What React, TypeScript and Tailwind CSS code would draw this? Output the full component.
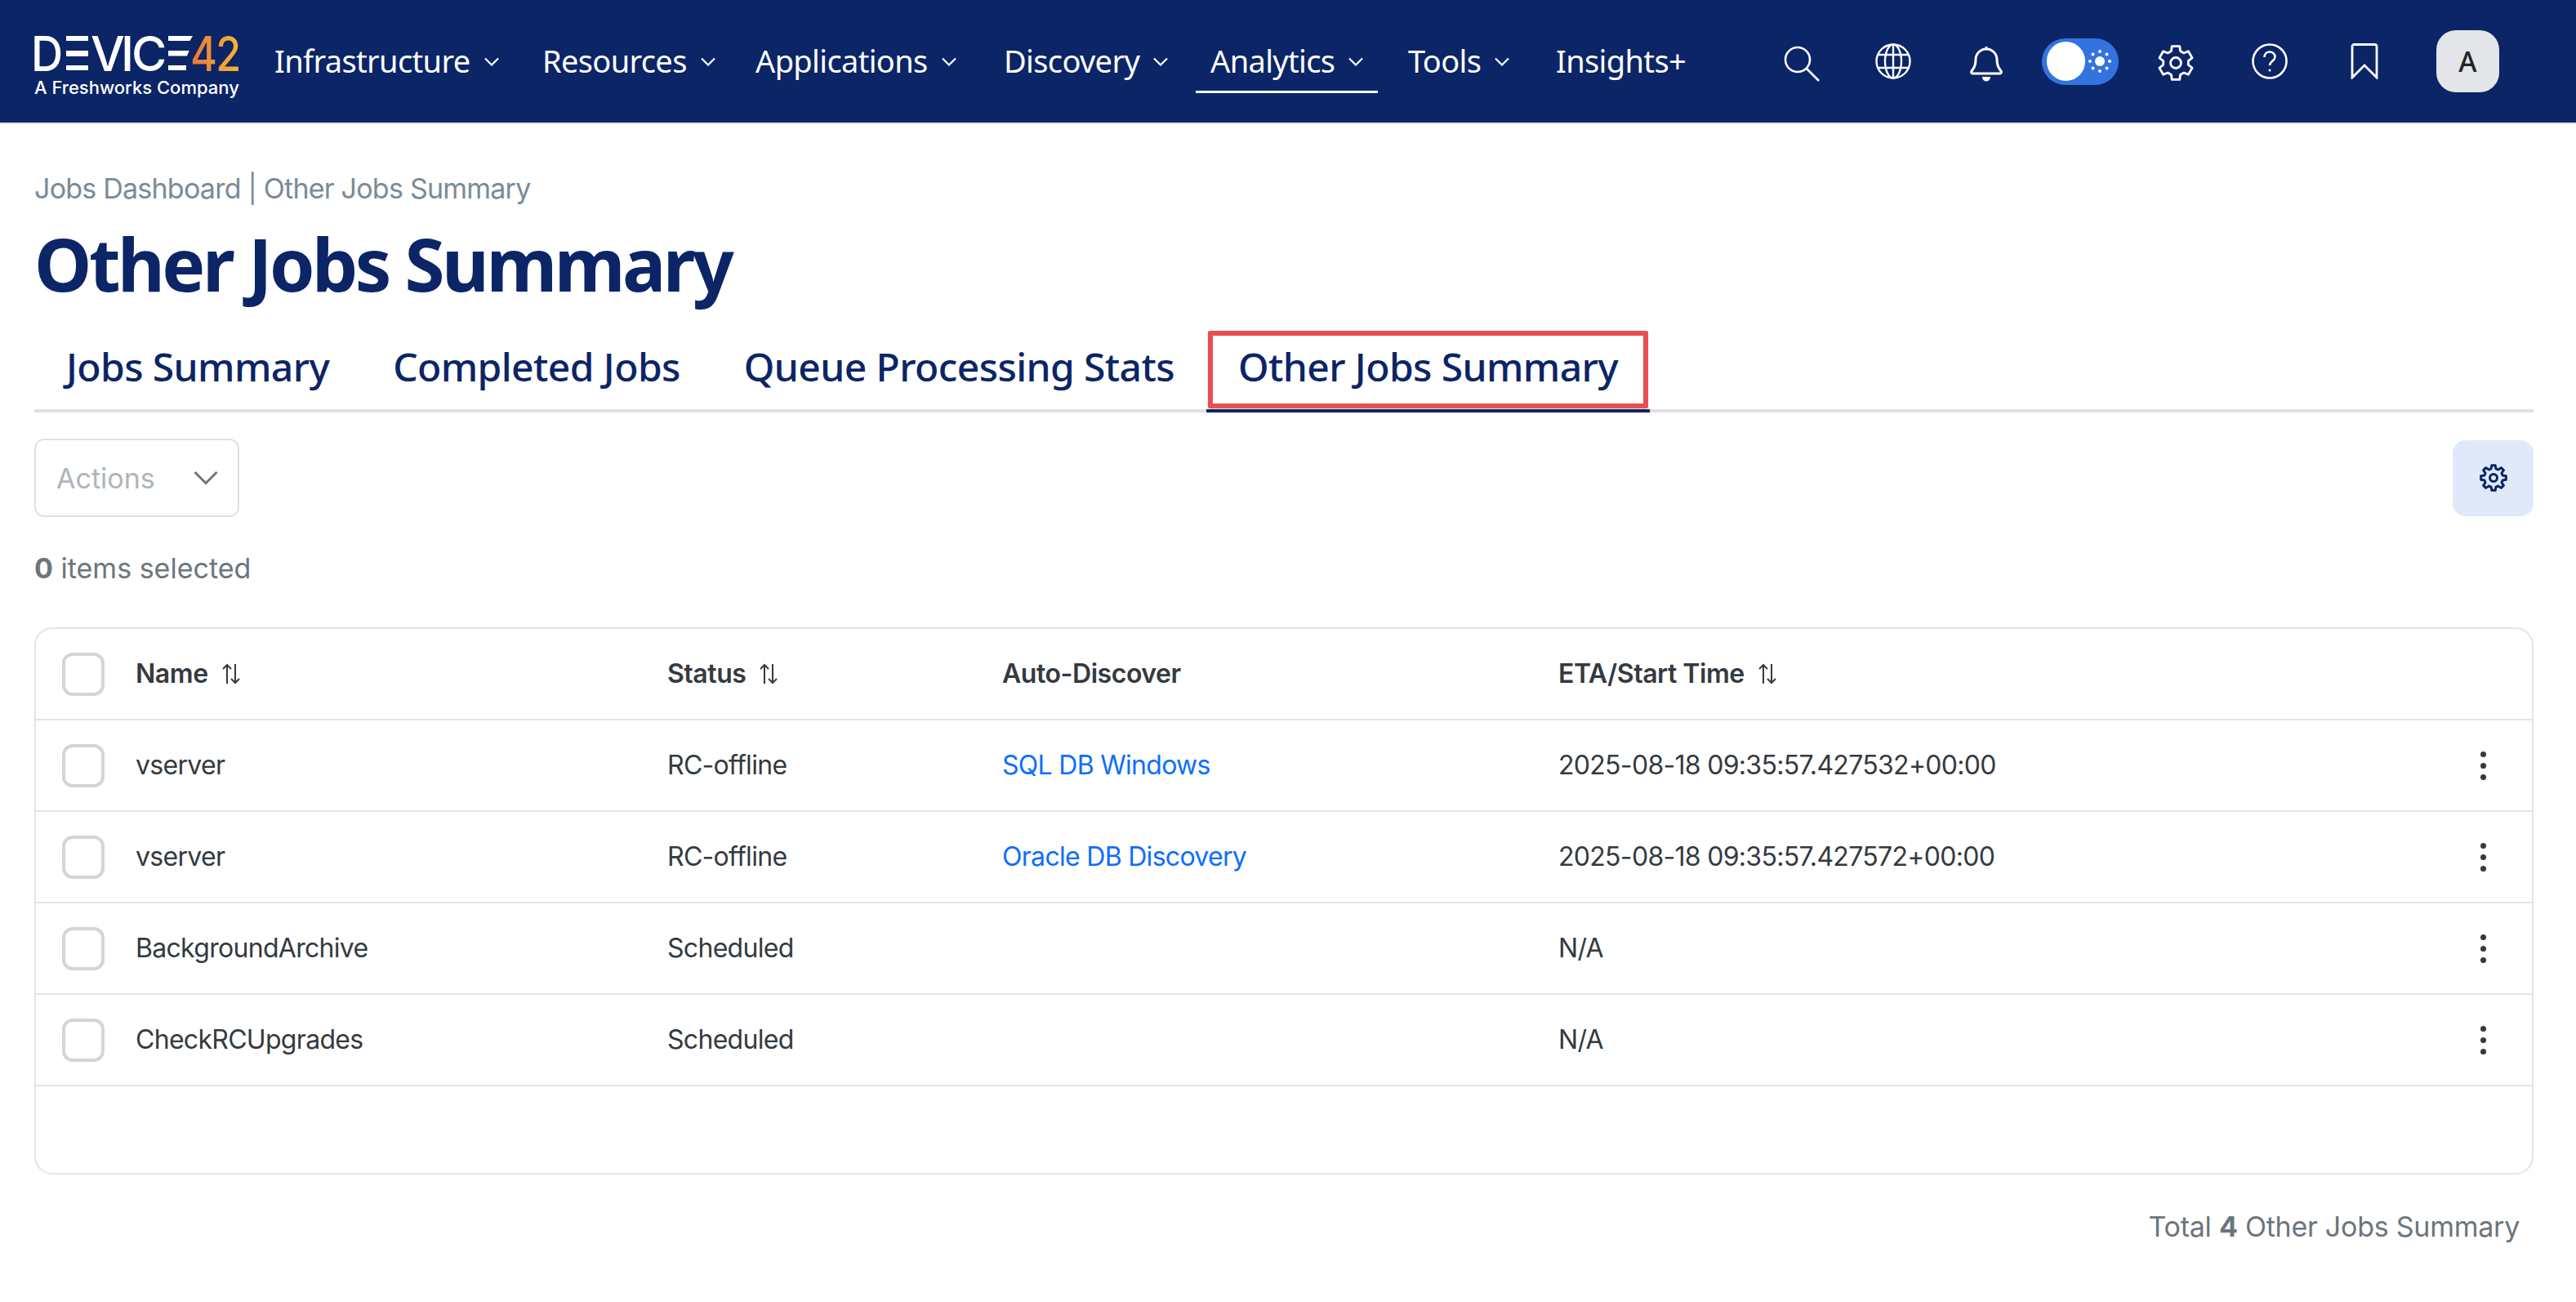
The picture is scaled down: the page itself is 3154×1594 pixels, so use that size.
const navy = '#0b2566';

type NavItem = { label: string; start: string; chevron?: boolean; active?: boolean };

const navItems: NavItem[] = [
  { label: 'Infrastructure', start: 'w-[328px]', chevron: true },
  { label: 'Resources', start: 'w-[261px]', chevron: true },
  { label: 'Applications', start: 'w-[304px]', chevron: true },
  { label: 'Discovery', start: 'w-[253px]', chevron: true },
  { label: 'Analytics', start: 'w-[242px]', chevron: true, active: true },
  { label: 'Tools', start: 'w-[181px]', chevron: true },
  { label: 'Insights+', start: 'w-[200px]' },
];

const rows = [
  { name: 'vserver', status: 'RC-offline', link: 'SQL DB Windows', eta: '2025-08-18 09:35:57.427532+00:00' },
  { name: 'vserver', status: 'RC-offline', link: 'Oracle DB Discovery', eta: '2025-08-18 09:35:57.427572+00:00' },
  { name: 'BackgroundArchive', status: 'Scheduled', link: '', eta: 'N/A' },
  { name: 'CheckRCUpgrades', status: 'Scheduled', link: '', eta: 'N/A' },
];

// gear outline with the first tooth pointing up
function gearPath(teeth: number, c: number, rOuter: number, rInner: number, tip: number, base: number) {
  const pt = (r: number, deg: number) => {
    const a = (deg * Math.PI) / 180;
    return `${(c + r * Math.cos(a)).toFixed(2)} ${(c + r * Math.sin(a)).toFixed(2)}`;
  };
  let d = '';
  for (let i = 0; i < teeth; i++) {
    const a = -90 + (i * 360) / teeth;
    d += `${i === 0 ? 'M' : 'L'}${pt(rInner, a - base)}L${pt(rOuter, a - tip)}L${pt(rOuter, a + tip)}L${pt(rInner, a + base)}`;
  }
  return d + 'Z';
}

function Chevron() {
  return (
    <svg width="18" height="11" viewBox="0 0 18 11" fill="none" stroke="white" strokeWidth="2.2" className="mt-[4px] ml-[17px]">
      <path d="M1 1.5l8 8 8-8" />
    </svg>
  );
}

function SortIcon() {
  return (
    <svg width="24" height="26" viewBox="0 0 24 26" fill="none" stroke="#343a40" strokeWidth="2" className="ml-[16px]">
      <path d="M7 25V2M2 7l5-5 5 5" />
      <path d="M17 1v23M12 19l5 5 5-5" />
    </svg>
  );
}

function Checkbox() {
  return <div className="h-[53px] w-[52px] rounded-[13px] border-[4px] border-[#d1d6db] bg-white" />;
}

function Dots() {
  return (
    <div className="flex flex-col gap-[7px] pr-[56px]">
      <div className="h-[7px] w-[7px] rounded-full bg-[#343a40]" />
      <div className="h-[7px] w-[7px] rounded-full bg-[#343a40]" />
      <div className="h-[7px] w-[7px] rounded-full bg-[#343a40]" />
    </div>
  );
}

function Logo() {
  return (
    <div className="flex w-[294px] flex-col pt-[12px]">
      <div className="flex h-[46px] items-center text-[59px] leading-none font-medium text-white">
        <span className="-ml-[4px] w-[43px] origin-left scale-x-[0.92]">D</span>
        <div className="flex h-[42px] w-[27px] flex-col justify-between">
          <div className="h-[6px] bg-white" />
          <div className="h-[7px] bg-white" />
          <div className="h-[6px] bg-white" />
        </div>
        <span className="ml-[3px] w-[41px]">V</span>
        <span className="-ml-[4px] w-[16px]">I</span>
        <span className="-ml-[3px] w-[45px]">C</span>
        <div className="flex h-[42px] w-[30px] flex-col justify-between">
          <div className="h-[6px] bg-white [clip-path:polygon(0_0,100%_0,88%_100%,0_100%)]" />
          <div className="h-[7px] w-[26px] bg-white [clip-path:polygon(0_0,100%_0,88%_100%,0_100%)]" />
          <div className="h-[6px] w-[22px] bg-white" />
        </div>
        <span className="-ml-[3px] origin-left scale-x-[0.85] bg-linear-to-r from-[#e8743b] to-[#f5b82e] bg-clip-text tracking-[-2px] text-transparent">42</span>
      </div>
      <span className="mt-[6px] text-[22px] leading-[26px] font-medium whitespace-nowrap text-white">A Freshworks Company</span>
    </div>
  );
}

export default function App() {
  return (
    <div className="min-h-[1594px] bg-white font-['Inter',sans-serif]">
      <header className="flex h-[152px] items-center border-b-[2px] border-[#e0e3e8] bg-[#0b2566] pl-[42px]">
        <Logo />
        <nav className="flex h-full items-center font-['Noto_Sans',sans-serif]">
          {navItems.map((item) => (
            <div key={item.label} className={`${item.start} flex h-full items-center`}>
              <div
                className={`flex h-[78px] items-center pb-[3px] text-[38px] leading-none tracking-[-0.65px] whitespace-nowrap text-white ${
                  item.active ? '-ml-[18px] border-b-[3px] border-white px-[18px] pt-[3px]' : ''
                }`}
              >
                {item.label}
                {item.chevron && <Chevron />}
              </div>
            </div>
          ))}
        </nav>
        <div className="ml-auto flex items-center pr-[94px]">
          <svg width="44" height="44" viewBox="0 0 44 44" fill="none" stroke="white" strokeWidth="2.6" className="mt-[5px]">
            <circle cx="17" cy="17" r="15" />
            <path d="M28 28l15 15" />
          </svg>
          <svg width="44" height="44" viewBox="0 0 44 44" fill="none" stroke="white" strokeWidth="2.4" className="ml-[68px]">
            <circle cx="22" cy="22" r="20.5" />
            <ellipse cx="22" cy="22" rx="10" ry="20.5" />
            <path d="M4 14h36M4 30h36M22 2v40" />
          </svg>
          <svg width="40" height="44" viewBox="0 0 40 44" fill="none" stroke="white" strokeWidth="3" className="mt-[5px] ml-[72px]">
            <path d="M20 1v3M7 17a13 13 0 0 1 26 0c0 7 2 10 5 14c1 1.5 0 3-2 3H4c-2 0-3-1.500-2-3c3-4 5-7 5-14z" />
            <path d="M15 38h10c0 3-2 5.500-5 5.500s-5-2.500-5-5.500z" fill="white" stroke="none" />
          </svg>
          <div className="ml-[48px] flex h-[57px] w-[94px] items-center rounded-full bg-[#3273e0] pl-[6px]">
            <div className="h-[48px] w-[47px] rounded-full bg-white" />
            <svg width="30" height="30" viewBox="0 0 30 30" fill="white" className="ml-[3px]">
              <circle cx="15" cy="15" r="6" />
              <circle cx="15" cy="3" r="2" />
              <circle cx="15" cy="27" r="2" />
              <circle cx="3" cy="15" r="2" />
              <circle cx="27" cy="15" r="2" />
              <circle cx="6.5" cy="6.5" r="2" />
              <circle cx="23.5" cy="6.5" r="2" />
              <circle cx="6.5" cy="23.5" r="2" />
              <circle cx="23.5" cy="23.5" r="2" />
            </svg>
          </div>
          <svg width="48" height="48" viewBox="0 0 48 48" fill="none" stroke="white" strokeWidth="2.8" strokeLinejoin="round" className="mt-[4px] ml-[46px]">
            <path d={gearPath(6, 24, 21, 15.5, 13, 21)} />
            <circle cx="24" cy="24" r="6.5" />
          </svg>
          <svg width="44" height="44" viewBox="0 0 44 44" fill="none" stroke="white" strokeWidth="2.6" className="ml-[69px]">
            <circle cx="22" cy="22" r="20.5" />
            <path d="M15.500 17c0-4 3-6.500 6.500-6.500s6.500 2.500 6.500 6c0 5-6.500 5.500-6.500 10.500" />
            <circle cx="22" cy="33" r="1.500" fill="white" stroke="none" />
          </svg>
          <svg width="34" height="44" viewBox="0 0 34 44" fill="none" stroke="white" strokeWidth="2.8" className="ml-[77px]">
            <path d="M2 42V4c0-1.500 1-2.500 2.500-2.500h25C31 1.500 32 2.500 32 4v38L17 27z" />
          </svg>
          <div className="ml-[71px] flex h-[76px] w-[77px] items-center justify-center rounded-[24px] bg-[#e3e5e8] font-['Noto_Sans',sans-serif] text-[34px] font-medium text-[#212529]">A</div>
        </div>
      </header>

      <main className="pr-[52px] pl-[42px]">
        <div className="mt-[57px] text-[34px] leading-[44px] tracking-[-0.77px] text-[#7b8a97]">Jobs Dashboard | Other Jobs Summary</div>
        <h1 className="mt-[15px] font-['Noto_Sans',sans-serif] text-[89px] leading-[110px] font-bold tracking-[-3.5px] text-[#0b2566]">Other Jobs Summary</h1>

        <div className="mt-[27px] flex h-[100px] border-b-[4px] border-[#dee2e6]">
          {['Jobs Summary', 'Completed Jobs', 'Queue Processing Stats'].map((tab) => (
            <div key={tab} className="flex h-[96px] items-center px-[39px] pb-[8px] font-['Noto_Sans',sans-serif] text-[48px] font-medium tracking-[-0.6px] text-[#0b2566]">
              {tab}
            </div>
          ))}
          <div className="h-[100px] border-b-[4px] border-[#0b2566] px-[2px]">
            <div className="flex h-[95px] items-center rounded-[2px] border-[6px] border-[#e94f52] px-[31px] pb-[7px] font-['Noto_Sans',sans-serif] text-[48px] font-medium tracking-[-0.6px] text-[#0b2566] shadow-sm">
              Other Jobs Summary
            </div>
          </div>
        </div>

        <div className="mt-[32px] flex items-center justify-between">
          <div className="flex h-[96px] w-[251px] items-center justify-between rounded-[12px] border-[2px] border-[#dee2e6] pr-[24px] pl-[25px] text-[34px] text-[#adb5bd]">
            Actions
            <svg width="30" height="18" viewBox="0 0 30 18" fill="none" stroke="#6c757d" strokeWidth="3">
              <path d="M1.500 2l13.500 13.500L28.500 2" />
            </svg>
          </div>
          <div className="flex h-[93px] w-[99px] items-center justify-center rounded-[16px] bg-[#e0e9fa]">
            <svg width="36" height="36" viewBox="0 0 36 36" fill="none" stroke={navy} strokeWidth="3" strokeLinejoin="round">
              <path d={gearPath(8, 18, 15.5, 11.5, 8, 15)} />
              <circle cx="18" cy="18" r="4.500" />
            </svg>
          </div>
        </div>

        <div className="mt-[41px] text-[34px] leading-[44px] text-[#6c757d]">
          <span className="font-bold">0</span> items selected
        </div>

        <div className="mt-[50px] h-[670px] overflow-hidden rounded-[22px] border-[2px] border-[#e2e4e8] text-[32px] tracking-[-0.7px] text-[#343a40]">
          <div className="grid h-[112px] grid-cols-[122px_651px_410px_681px_1fr_auto] items-center border-b-[2px] border-[#e2e4e8] font-semibold tracking-[-0.45px]">
            <div className="pl-[32px]">
              <Checkbox />
            </div>
            <div className="flex items-center">
              Name
              <SortIcon />
            </div>
            <div className="flex items-center">
              Status
              <SortIcon />
            </div>
            <div>Auto-Discover</div>
            <div className="flex items-center">
              ETA/Start Time
              <SortIcon />
            </div>
            <div />
          </div>
          {rows.map((row) => (
            <div key={row.eta + row.name} className="grid h-[112px] grid-cols-[122px_651px_410px_681px_1fr_auto] items-center border-b-[2px] border-[#e2e4e8]">
              <div className="pl-[32px]">
                <Checkbox />
              </div>
              <div>{row.name}</div>
              <div>{row.status}</div>
              <div className="text-[#0d6efd]">{row.link}</div>
              <div>{row.eta}</div>
              <Dots />
            </div>
          ))}
        </div>

        <div className="mt-[42px] pr-[17px] text-right text-[34px] leading-[44px] tracking-[-0.25px] text-[#6c757d]">
          Total <span className="font-bold">4</span> Other Jobs Summary
        </div>
      </main>
    </div>
  );
}
